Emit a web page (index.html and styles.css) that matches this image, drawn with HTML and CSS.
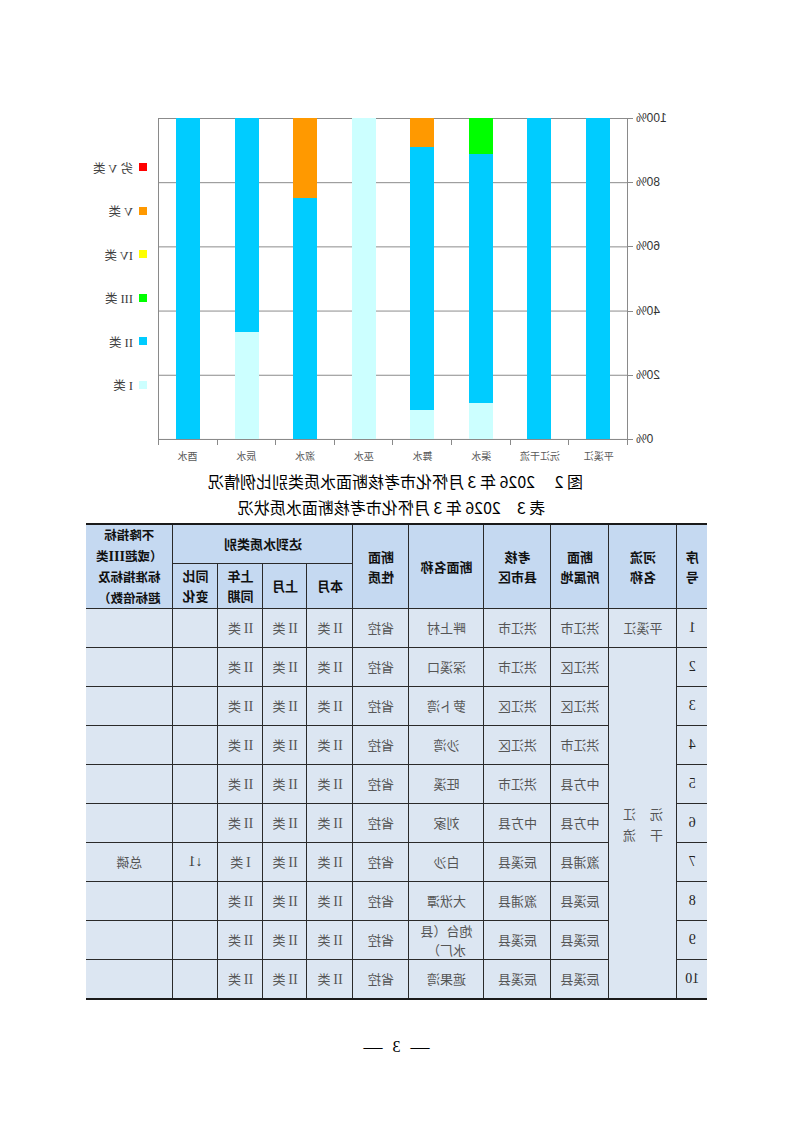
FILE: index.html
```html
<!DOCTYPE html>
<html lang="zh-CN">
<head>
<meta charset="utf-8">
<title>2026年3月怀化市考核断面水质状况</title>
<link rel="stylesheet" href="styles.css">
</head>
<body>
<div class="page">
  <div class="chart">
    <div class="ylabels">
      <span class="ylab">100%</span>
      <span class="ylab">80%</span>
      <span class="ylab">60%</span>
      <span class="ylab">40%</span>
      <span class="ylab">20%</span>
      <span class="ylab">0%</span>
    </div>
    <div class="plotcol">
      <div class="plot">
        <div class="cat"><div class="bar"><i class="c2" style="height:100%"></i></div></div>
        <div class="cat"><div class="bar"><i class="c2" style="height:100%"></i></div></div>
        <div class="cat"><div class="bar"><i class="c1" style="height:11.1%"></i><i class="c2" style="height:77.8%"></i><i class="c3" style="height:11.1%"></i></div></div>
        <div class="cat"><div class="bar"><i class="c1" style="height:9.1%"></i><i class="c2" style="height:81.8%"></i><i class="c5" style="height:9.1%"></i></div></div>
        <div class="cat"><div class="bar"><i class="c1" style="height:100%"></i></div></div>
        <div class="cat"><div class="bar"><i class="c2" style="height:75%"></i><i class="c5" style="height:25%"></i></div></div>
        <div class="cat"><div class="bar"><i class="c1" style="height:33.3%"></i><i class="c2" style="height:66.7%"></i></div></div>
        <div class="cat"><div class="bar"><i class="c2" style="height:100%"></i></div></div>
      </div>
      <div class="ticks"><span></span><span></span><span></span><span></span><span></span><span></span><span></span><span></span></div>
      <div class="xlabels">
        <span>平溪江</span><span>沅江干流</span><span>渠水</span><span>舞水</span><span>巫水</span><span>溆水</span><span>辰水</span><span>酉水</span>
      </div>
    </div>
    <div class="legend">
      <div class="leg"><b class="c6"></b>劣 V 类</div>
      <div class="leg"><b class="c5"></b>V 类</div>
      <div class="leg"><b class="c4"></b>IV 类</div>
      <div class="leg"><b class="c3"></b>III 类</div>
      <div class="leg"><b class="c2"></b>II 类</div>
      <div class="leg"><b class="c1"></b>I 类</div>
    </div>
  </div>

  <div class="captions">
    <p class="cap1">图 2 　2026 年 3 月怀化市考核断面水质类别比例情况</p>
    <p class="cap2">表 3　2026 年 3 月怀化市考核断面水质状况</p>
  </div>

  <table class="wq">
    <colgroup>
      <col style="width:30px"><col style="width:68px"><col style="width:58px"><col style="width:67px"><col style="width:75px"><col style="width:56px"><col style="width:46px"><col style="width:44px"><col style="width:45px"><col style="width:45px"><col style="width:87px">
    </colgroup>
    <thead>
      <tr class="h1">
        <th rowspan="2" class="first">序<br>号</th>
        <th rowspan="2">河流<br>名称</th>
        <th rowspan="2">断面<br>所属地</th>
        <th rowspan="2">考核<br>县市区</th>
        <th rowspan="2">断面名称</th>
        <th rowspan="2">断面<br>性质</th>
        <th colspan="4">达到水质类别</th>
        <th rowspan="2" class="last lh">不降指标<br>（或超<span class="rn">III</span>类<br>标准指标及<br>超标倍数）</th>
      </tr>
      <tr class="h2">
        <th>本月</th>
        <th>上月</th>
        <th>上年<br>同期</th>
        <th>同比<br>变化</th>
      </tr>
    </thead>
    <tbody>
      <tr>
        <td class="first num">1</td><td>平溪江</td><td>洪江市</td><td>洪江市</td><td>畔上村</td><td>省控</td>
        <td><span class="rn">II</span> 类</td><td><span class="rn">II</span> 类</td><td><span class="rn">II</span> 类</td><td></td><td class="last"></td>
      </tr>
      <tr>
        <td class="first num">2</td>
        <td rowspan="9" class="vname"><span class="vn"><span>沅</span><span>江</span><span>干</span><span>流</span></span></td>
        <td>洪江区</td><td>洪江市</td><td>深溪口</td><td>省控</td>
        <td><span class="rn">II</span> 类</td><td><span class="rn">II</span> 类</td><td><span class="rn">II</span> 类</td><td></td><td class="last"></td>
      </tr>
      <tr>
        <td class="first num">3</td><td>洪江区</td><td>洪江区</td><td>萝卜湾</td><td>省控</td>
        <td><span class="rn">II</span> 类</td><td><span class="rn">II</span> 类</td><td><span class="rn">II</span> 类</td><td></td><td class="last"></td>
      </tr>
      <tr>
        <td class="first num">4</td><td>洪江市</td><td>洪江区</td><td>沙湾</td><td>省控</td>
        <td><span class="rn">II</span> 类</td><td><span class="rn">II</span> 类</td><td><span class="rn">II</span> 类</td><td></td><td class="last"></td>
      </tr>
      <tr>
        <td class="first num">5</td><td>中方县</td><td>洪江市</td><td>旺溪</td><td>省控</td>
        <td><span class="rn">II</span> 类</td><td><span class="rn">II</span> 类</td><td><span class="rn">II</span> 类</td><td></td><td class="last"></td>
      </tr>
      <tr>
        <td class="first num">6</td><td>中方县</td><td>中方县</td><td>刘家</td><td>省控</td>
        <td><span class="rn">II</span> 类</td><td><span class="rn">II</span> 类</td><td><span class="rn">II</span> 类</td><td></td><td class="last"></td>
      </tr>
      <tr>
        <td class="first num">7</td><td>溆浦县</td><td>辰溪县</td><td>白沙</td><td>省控</td>
        <td><span class="rn">II</span> 类</td><td><span class="rn">II</span> 类</td><td><span class="rn">I</span> 类</td><td class="chg">↓1</td><td class="last">总磷</td>
      </tr>
      <tr>
        <td class="first num">8</td><td>辰溪县</td><td>溆浦县</td><td>大洑潭</td><td>省控</td>
        <td><span class="rn">II</span> 类</td><td><span class="rn">II</span> 类</td><td><span class="rn">II</span> 类</td><td></td><td class="last"></td>
      </tr>
      <tr>
        <td class="first num">9</td><td>辰溪县</td><td>辰溪县</td><td class="two">炮台（县<br>水厂）</td><td>省控</td>
        <td><span class="rn">II</span> 类</td><td><span class="rn">II</span> 类</td><td><span class="rn">II</span> 类</td><td></td><td class="last"></td>
      </tr>
      <tr>
        <td class="first num">10</td><td>辰溪县</td><td>辰溪县</td><td>遮果湾</td><td>省控</td>
        <td><span class="rn">II</span> 类</td><td><span class="rn">II</span> 类</td><td><span class="rn">II</span> 类</td><td></td><td class="last"></td>
      </tr>
    </tbody>
  </table>

  <div class="pagenum"><span class="dash">—</span><span class="pn">3</span><span class="dash">—</span></div>
</div>
</body>
</html>
```

FILE: styles.css
```css
html, body {
  margin: 0;
  padding: 0;
  background: #ffffff;
}

body {
  width: 793px;
  height: 1122px;
  overflow: hidden;
  font-family: "Noto Sans CJK SC", "Liberation Sans", sans-serif;
  color: #000;
}

/* the reference page is a mirror image */
.page {
  width: 793px;
  height: 1122px;
  box-sizing: border-box;
  padding-top: 118px;
  transform: scaleX(-1);
}

/* ---------- chart ---------- */
.chart {
  display: grid;
  grid-template-columns: 165px 470px 1fr;
  align-items: start;
}

.ylabels {
  height: 321px;
  display: flex;
  flex-direction: column;
  justify-content: space-between;
  padding-right: 8px;
}

.ylab {
  position: relative;
  height: 0;
  display: flex;
  align-items: center;
  justify-content: flex-end;
  font-family: "Liberation Sans", Arial, sans-serif;
  font-size: 12px;
  color: #333;
}

.ylab::after {
  content: "";
  position: absolute;
  right: -8px;
  top: 0;
  width: 5px;
  border-top: 1px solid #8a8a8a;
}

.plotcol {
  display: flex;
  flex-direction: column;
}

.plot {
  height: 321px;
  display: flex;
  align-items: stretch;
  border-left: 1px solid #8a8a8a;
  border-right: 1px solid #8a8a8a;
  border-bottom: 1px solid #8a8a8a;
  background-image: linear-gradient(#8a8a8a 1px, transparent 1px);
  background-size: 100% 64.2px;
}

.cat {
  flex: 1;
  display: flex;
  justify-content: center;
}

.bar {
  width: 24px;
  height: 100%;
  display: flex;
  flex-direction: column-reverse;
}

.bar i {
  display: block;
}

.c1 { background: #ccffff; }
.c2 { background: #00ccff; }
.c3 { background: #00ff00; }
.c4 { background: #ffff00; }
.c5 { background: #ff9900; }
.c6 { background: #ff0000; }

.ticks {
  display: flex;
  height: 5px;
  border-right: 1px solid #8a8a8a;
}

.ticks span {
  flex: 1;
  border-left: 1px solid #8a8a8a;
}

.xlabels {
  display: flex;
  margin-top: 5px;
}

.xlabels span {
  flex: 1;
  text-align: center;
  font-size: 10px;
  line-height: 12px;
  color: #595959;
}

.legend {
  padding-left: 11px;
  padding-top: 43px;
  display: flex;
  flex-direction: column;
  gap: 31.6px;
}

.leg {
  display: flex;
  align-items: center;
  gap: 6px;
  height: 12px;
  font-family: "Liberation Serif", "Noto Sans CJK SC", serif;
  font-size: 12.5px;
  color: #404040;
  white-space: nowrap;
}

.leg b {
  display: block;
  width: 8px;
  height: 8px;
}

/* ---------- captions ---------- */
.captions {
  margin-top: 6px;
  text-align: center;
}

.captions p {
  margin: 0;
  font-size: 16px;
  line-height: 26px;
  white-space: pre;
}

.captions .cap1 {
  padding-left: 2px;
}

.captions .cap2 {
  padding-left: 10px;
}

/* ---------- table ---------- */
.wq {
  margin: 3px 0 0 86px;
  width: 621px;
  table-layout: fixed;
  border-collapse: collapse;
  border-top: 2.5px solid #1a1a1a;
  border-bottom: 2.5px solid #1a1a1a;
}

.wq th, .wq td {
  border: 1px solid #2a2a2a;
  padding: 0;
  text-align: center;
  vertical-align: middle;
}

.wq th {
  background: #c5d9f1;
  font-weight: 700;
  font-size: 13px;
  line-height: 20px;
  color: #111;
}

.wq .h1 { height: 39px; }
.wq .h2 { height: 45px; }

.wq th.lh {
  line-height: 20.5px;
  font-size: 12.5px;
}

.wq td {
  background: #dce6f2;
  height: 38px;
  font-size: 13px;
  line-height: 18px;
  color: #555;
}

.wq .first { border-left: none; }
.wq .last { border-right: none; }

.wq td.num {
  font-family: "Liberation Serif", serif;
  font-size: 14px;
  color: #222;
}

.rn {
  font-family: "Liberation Serif", serif;
  font-size: 14px;
}

.wq td.chg {
  font-family: "Liberation Serif", "Noto Sans CJK SC", serif;
  font-size: 14px;
  color: #333;
}

.wq td.two {
  line-height: 19px;
}

.vn {
  display: inline-grid;
  grid-template-columns: 13px 13px;
  column-gap: 14px;
  row-gap: 8px;
  font-size: 13px;
  line-height: 13px;
}

/* ---------- page number ---------- */
.pagenum {
  margin-top: 37px;
  display: flex;
  justify-content: center;
  align-items: center;
  font-family: "Liberation Serif", serif;
  line-height: 20px;
}

.pagenum .dash {
  font-size: 19px;
}

.pagenum .pn {
  font-size: 16px;
  margin: 0 10px;
}
```
